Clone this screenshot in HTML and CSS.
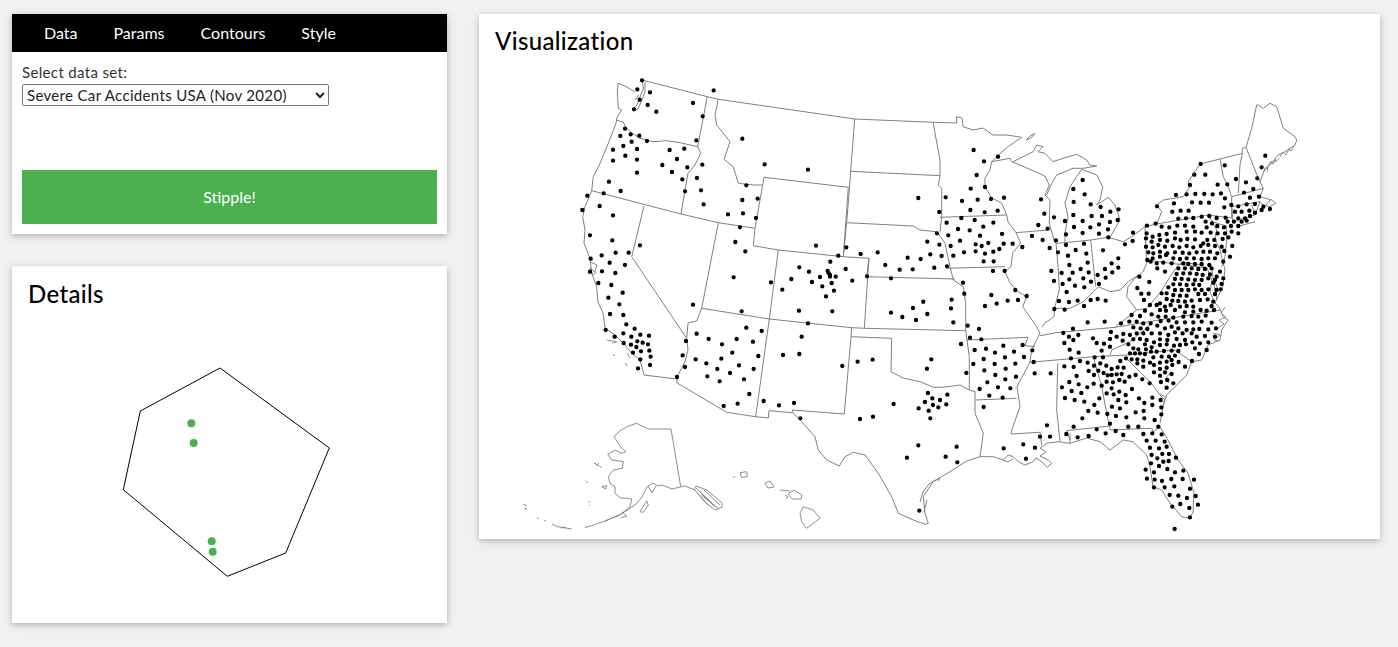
FILE: index.html
```html
<!DOCTYPE html>
<html lang="en">
<head>
  <meta charset="UTF-8">
  <title>Stippling</title>
  <link rel="stylesheet" href="styles.css">
</head>
<body>
<div class="page">
  <div class="side">
    <div class="card controls">
      <div class="tabs">
        <a href="#">Data</a>
        <a href="#">Params</a>
        <a href="#">Contours</a>
        <a href="#">Style</a>
      </div>
      <div class="tab-body">
        <label for="dataset">Select data set:</label>
        <select id="dataset">
          <option>Severe Car Accidents USA (Nov 2020)</option>
        </select>
        <button class="go">Stipple!</button>
      </div>
    </div>
    <div class="card details">
      <h2>Details</h2>
      <svg class="details-plot" viewBox="12 320 435 303">
        <polygon class="cell" points="220,368 329.3,448 285.7,553 227.3,576.3 123.3,489.7 140.3,411"/>
        <circle class="pick" cx="191.3" cy="423.3" r="4"/>
        <circle class="pick" cx="193.7" cy="443" r="4"/>
        <circle class="pick" cx="211.7" cy="541.3" r="4"/>
        <circle class="pick" cx="212.7" cy="551.7" r="4"/>
      </svg>
    </div>
  </div>
  <div class="card vis">
    <h2>Visualization</h2>
    <svg class="map" viewBox="479 66 901 473">
      <!-- outer coast and borders -->
      <path class="states" d="M642 80 707.3 96.7 718.3 99.3 854.7 119 933.3 122.3 956.7 123 956.7 116.7 962 118 963 126.7 973 130 983 128 993 135 1006.7 135 1021.7 137.3 1008 146.7 996.7 156.7 991.7 161.7 990 170 985 178 985 186.7 991.7 198 1001.7 203 1006.7 215 1008 221.7 1016 232.7 1020.7 243 1012.7 253 1011 266.7 1005 271.7 1010 283 1018 291.7 1026.7 296.7 1022.7 306.7 1036.7 326.7 1040 333 1035 343 1031.7 350 1030 362 1017 386.7 1020 406.7 1011.7 430 1011 434 1040 432.3 1041.7 445"/>
      <path class="states" d="M618.3 83.3 617.3 90 618.3 108.3 621.7 110 617.3 116.7 616 123.3 608.3 143.3 600 163.3 593.3 176.7 591.7 190.7 585 206.7 582.7 216.7 585 230 584 243.3 590 258.3 591.7 273.3 596.7 286.7 598 301.7 603 313 605 328 615 335 623 343 631.7 353 640 360 644 375 676.7 379M618.3 83.3 627 87 635 92"/>
      <path class="states" d="M642 80 643.5 88 640 97 637 105 633 109M645 82 645 92 641 102 638 109 634 110M639 95 635 100M616 120 623 122 626 127 630 131.7 640 138.3 653 141.7 666.7 140.7 680 142.7 697.7 146.7 707.3 96.7M697.7 146.7 700.7 153.3 695 165 688 173.3 685 190 681 214M591.7 190.7 681 214 718.3 222.7 755 228.3 764 177.3 848.3 187.3 843.3 256.7 778.3 250 753.3 245.7 755 228.3"/>
      <path class="states" d="M644 206 631.7 256.7 686.7 338.3 688 350 685 361.7 678 375 676.7 382.7 726.7 412.3 755.7 416.7 769.3 319 701.7 308.3 718.3 222.7M686.7 338.3 688 323 696.7 321 701.7 308.3M778.3 250 769.3 319 851.7 327.7 864.3 328.3 869 258.3 843.3 256.7M864.3 328.3 965.7 330.7M851.7 327.7 851 336.7 891.7 338.3 891 371.7 903 378 920 381.7 933.3 387.3 943 387.3 960 385 969.3 390 975 391.7 975 413.3 983.3 433.3 980 456.7 966.7 461 950 471.7 933 481.7 923.3 496.7 925 513.3 928.3 523.3 925 524.3 913.3 520 898.3 513.3 891.7 496.7 878.3 473.3 865 455 853.3 452.3 845 456.7 839.3 466 826.7 460 818.3 450 815 436.7 801.7 421.7 793.3 413.3 792.3 410M920 502 923 492 929 484 936 480 940 478 938 481M924 512 927 500"/>
      <path class="states" d="M755.7 416.7 768.3 418 769 410.7 792.3 412.7M792.3 410 844.3 414 851 336.7M718.3 99.3 715 115 716.7 125 730 141.7 724 159.3 733.3 166.7 738.3 183.3 753.3 185 762.3 185M854.7 119 850.7 171.3 846.7 222.7 843.3 256.7M850.7 171.3 940 175.7M846.7 222.7 913.3 226 920 230 936.7 231.7 945 243.3 950 266.7 953.3 280 963.3 286.7 965.7 303.3 965.7 330.7 969.3 356.7 969.3 390M933.3 122.3 935 133.3 940 160 940 175.7 938.3 185 941.7 188.3 941.7 216.7 940 231.7M869 258.3 866.7 276.7 955 279M940 217.3 1006.7 215M946.7 268.3 1005 266.7M966.7 340 1028 337.3 1025 345.7 1035 346.7M975 400 1016.7 398.3"/>
      <!-- great lakes -->
      <path class="states" d="M991.7 161.7 1010 158.3 1011.7 161.7 1020 165 1045 176 1049.3 185 1045 195 1050 200 1049.3 223.3 1054 240 1056 243.3 1065 242.7 1090.7 240 1108.3 237.3 1123.3 241.7 1131.7 236.7 1145 226.7 1146.7 263.3 1143 271.7 1133.3 280 1128 286.7 1126.7 296.7 1136.7 310 1146.7 308.3 1160 293 1170 276.7 1178.3 265 1183 262 1200 265M1016 232.7 1048.3 230M1056 243.3 1058.3 270 1059.3 290 1055 306.7 1054 316.7 1045 323 1041.7 327.3M1090.7 240 1095.7 286.7M1054 308.3 1070 308.3 1083.3 301.7 1093.3 291.7 1098.3 286.7 1110 291.7 1120 290 1128.3 281.7 1138.3 275"/>
      <path class="states" d="M1013 161.7 1026.7 155 1033 151.7 1036.7 145 1043 146.7 1038 151.7 1045 153.3 1053 161.7 1063 158.3 1076.7 154.3 1086.7 160 1090 165 1096.7 166 1083 168.3 1073 168.3 1065 171.7 1056.7 175 1051.7 183.3 1046.7 195M1026 140 1030 136 1035 133.5 1031 138 1026 140M1065 242.7 1065 233 1068 216.7 1065 203 1070 186.7 1076.7 176.7 1081.7 169.3 1096.7 175 1102.7 186.7 1100 200 1096.7 205 1108.3 197.3 1115 205 1120 220 1110 237.3"/>
      <!-- northeast -->
      <path class="states" d="M1145 226.7 1156.7 224 1208.3 215 1216.7 230 1215 238.3 1220 250 1225 270 1222.7 286.7 1218 296.7 1215 303M1156.7 224 1161.7 211.7 1156.7 205 1163.3 200 1183.3 196.7 1190 186.7 1188.3 181.7 1200 164 1220 159 1242.3 153.3 1242.3 148.3 1246 147.3 1258.3 178.3 1263.3 188.3 1260 196.7 1271.7 200 1275.7 203 1270 206.7 1263 205 1260 201.7 1231.7 206.7 1233 221.7 1255 215 1260 201.7M1220 159 1223.3 176.7 1228.3 186.7 1231.7 196.7 1231.7 218 1208.3 215M1242.3 153.3 1240 165 1238.3 193.3M1231.7 196.7 1263.3 188.3M1246 147.3 1251.7 128.3 1256.7 105 1258.3 105 1263.3 108.3 1270 103.3 1276.7 106.7 1283.3 128.3 1295 136.7 1296.7 140 1295 145 1285 151.7 1278.3 155 1270 165 1265 168.3 1260 181.7M1251.7 205 1255 215M1236.7 226.7 1255 221.7M1211.7 221.7 1226.7 226 1226.7 240 1225 256.7 1221.7 266.7M1146.7 260 1207 268M1200 265 1207 268 1212 280 1210 292 1215 303M1212 270 1214 285 1217 300M1215 303 1219 306.7 1223 316.7 1228 320 1221.7 330 1220 340 1208 345 1201.7 360 1191.7 361.7 1186.7 375 1176.7 385 1166.7 395 1163 406.7 1160 423.3"/>
      <path class="states thin" d="M1280 157 1283 152 1286 155 1289 149 1291 151 1294 146M1268 166 1271 161 1273 164 1275 159 1276 162 1279 158M1264 171 1268 167 1267 172M1266 205 1270 200M1225 307 1221 313 1226 317 1219 320 1224 324 1217 329M1213 333 1220 335 1214 340 1220 341M1214 278 1218 290M1171 372 1165 379 1169 383M1160 394 1166 397 1163 403"/>
      <path class="states" d="M1040 335.7 1056 332.7 1115 327.3 1220 310M1115 327.3 1133 313 1136.7 310M1030 362.3 1093.3 356.7 1126.7 355 1175 350 1191.7 361.7M1110 355 1111.7 350 1130 341.7 1150 325M1128 360 1138 370 1150 381.7 1160 395 1165 400M1093.3 356.7 1101.7 386.7 1106.7 413.3 1110 428.3 1110 430 1151.7 428.3 1153 431.7 1160 426.7M1057.7 363.3 1056.7 410 1060 441.7M1066.7 430.7 1110 426M1066.7 430.7 1070 440"/>
      <!-- gulf coast -->
      <path class="states" d="M1160 426.7 1168 440 1178 460 1188 473 1194 493 1193 513 1188 518 1181.7 516.7 1170 503 1161.7 490 1153 486.7 1150 466.7 1146.7 455 1133 441.7 1123.3 440 1110 450 1100 441.7 1086.7 438 1070 443.3 1058.3 441.7 1046.7 443.3 1040 448.3 1046 451.7 1040 456 1048.3 460 1051.7 463.3 1047.3 467.3 1041.7 461.7 1036 458 1033.3 461.7 1025 465 1018.3 461.7 1013.3 456.7 1008.3 455 1003.3 460 1008 462 1013 459M993.3 456.7 1003.3 460M980 456.7 993.3 456.7M1070 434 1070 443.3"/>
      <!-- alaska, hawaii, islands -->
      <path class="states thin" d="M671 429 680.7 486.7M671 429 661.7 429 648.3 429 636.7 423.3 628.3 426 621 430 614 436.7 618.3 443.3 621.7 448.3 626 451.7 621.7 453.3 615 450 607.7 454.3 611.7 460 623.3 461.7 622.3 468.3 613.3 470 608.3 476.7 610 483.3 615 486.7 615 493.3 620 497.7 631.7 499 630 506.7 620 515 605 521 591.7 525.7 585 527.5M605 521 621 514 635 505 642 497 647 487 653 483 658 486 662 485 672 489 680 487 685 486 695 490 705 502 715 510 722 507 722 503 707 490 696 486 694 490M696 488 712 503M699 491 715 507M701 495 718 508M704 490 720 505M697 493 708 505M648 486 652 493 656 486M622 512 627 516 621 518M640 511.7 646.7 501 648.3 505 643.3 512.3ZM594 463 598 465 601.7 467.7M596 466 599 463M601.7 486.7 606.7 485.7 605.7 489 601.7 486.7M585.7 480.7 588 483M588.3 501.7 590 502M589 505 590 505.7M523 504 527 506M524 508 527 509M537 517.7 539 519M544 520 546 521M552 524 558 527M558 526.7 571.7 529M561 528 566 527"/>
      <path class="states thin" d="M803.3 506.7 813.3 510 820 518.3 806.7 528.3 801.7 521.7 800 513.3 803.3 506.7ZM788 494 794 490 802 495 801 499 792 499ZM765 483 770 481 774 487 768 488ZM740 472.7 746.7 471.7 747.3 476.7 741.7 477.3ZM733.3 478 735 476M780 490 790 491M785 495 788 497 786 499"/>
      <path class="states thin" d="M606.7 340 616.7 341.7 612 343M613 354 615 356M627 353 630 358M625 363 627 366M590 262 597 265 595 272 590 268 593 275 597 272"/>
      <!-- stipples, one layer per part of the map -->
      <path class="dots" transform="translate(570 70) scale(.3333)" d="M216 31h0M202 58h0M240 67h0M431 61h0M209 89h0M369 99h0M233 105h0M192 118h0M259 125h0M398 139h0M165 176h0M182 193h0M208 197h0M151 198h0M517 206h0M379 211h0M185 215h0M231 213h0M160 228h0M201 237h0M129 239h0M343 236h0M299 240h0M166 257h0M201 269h0M321 267h0M129 272h0M277 285h0M397 284h0M584 283h0M352 292h0M714 299h0M201 308h0M306 306h0M381 324h0M337 328h0M117 335h0M529 346h0M393 361h0M152 363h0M345 364h0M101 370h0M52 377h0M563 386h0M1045 384h0M1127 382h0M517 390h0M401 403h0M89 408h0M37 420h0M519 430h0M474 433h0M129 436h0M1108 426h0M558 444h0M1130 458h0M510 472h0M1101 490h0M1135 496h0M60 496h0M127 511h0M496 516h0M1072 515h0M738 527h0M1108 524h0M210 526h0M829 532h0M137 548h0M526 544h0M176 548h0M95 556h0M872 552h0M923 547h0M805 557h0M62 566h0M1081 553h0M1115 558h0M1013 563h0M1052 567h0M781 575h0M119 578h0M165 585h0M946 585h0M1131 589h0M688 592h0M1093 593h0M827 597h0M989 599h0M1028 598h0M717 605h0M773 603h0M60 605h0M96 604h0M136 609h0M776 610h0M780 615h0M780 620h0M797 620h0M750 621h0M491 622h0M664 627h0M891 619h0M963 625h0M603 637h0M847 632h0M726 636h0M785 639h0M85 639h0M124 645h0M637 659h0M757 649h0M792 662h0M158 668h0M1060 695h0M768 679h0M115 683h0M148 703h0M369 704h0M1029 714h0"/>
      <path class="dots" transform="translate(570 300) scale(.3333)" d="M515 34h0M687 32h0M787 34h0M963 38h0M1072 42h0M120 42h0M160 45h0M997 51h0M1038 60h0M714 70h0M169 73h0M529 83h0M194 86h0M107 90h0M575 93h0M380 101h0M160 100h0M211 104h0M237 107h0M134 110h0M184 110h0M695 110h0M416 117h0M500 117h0M202 124h0M218 128h0M161 129h0M549 125h0M234 133h0M183 134h0M456 133h0M199 141h0M348 123h0M238 152h0M213 154h0M189 158h0M487 158h0M639 165h0M688 162h0M338 166h0M565 168h0M242 170h0M377 178h0M454 176h0M211 178h0M1084 178h0M908 179h0M863 185h0M409 190h0M240 195h0M507 196h0M817 198h0M345 201h0M442 207h0M204 205h0M551 207h0M1071 206h0M480 219h0M412 229h0M321 231h0M522 238h0M449 244h0M1074 279h0M1132 284h0M538 282h0M1087 295h0M1110 300h0M581 303h0M1065 306h0M672 309h0M503 311h0M971 312h0M1089 315h0M1129 313h0M627 316h0M461 318h0M1105 322h0M1046 325h0M1076 332h0M691 355h0M870 357h0M909 350h0M1081 355h0M1045 436h0M1011 473h0M1127 470h0M1048 632h0"/>
      <path class="dots" transform="translate(930 300) scale(.3333)" d="M473 67h0M524 65h0M70 67h0M573 70h0M113 77h0M147 87h0M429 86h0M400 99h0M543 96h0M445 105h0M417 110h0M120 113h0M154 118h0M489 115h0M430 120h0M560 110h0M580 102h0M540 117h0M93 132h0M278 135h0M403 129h0M500 129h0M522 131h0M578 122h0M595 133h0M540 140h0M220 137h0M168 146h0M134 150h0M419 149h0M307 151h0M252 155h0M195 158h0M515 152h0M446 158h0M225 172h0M161 177h0M282 171h0M423 175h0M494 172h0M519 172h0M450 183h0M473 188h0M311 186h0M130 192h0M194 192h0M256 191h0M403 199h0M431 201h0M492 197h0M511 190h0M529 197h0M545 207h0M563 202h0M581 203h0M571 183h0M588 175h0M227 206h0M163 211h0M505 212h0M521 219h0M533 226h0M545 225h0M560 223h0M575 222h0M598 230h0M617 225h0M637 238h0M109 219h0M314 220h0M362 220h0M196 225h0M440 228h0M476 213h0M492 225h0M258 230h0M226 238h0M172 247h0M418 246h0M491 251h0M515 257h0M530 245h0M549 247h0M568 240h0M584 245h0M659 250h0M446 253h0M204 262h0M241 265h0M149 267h0M396 262h0M472 262h0M545 265h0M568 275h0M606 267h0M425 273h0M454 279h0M178 287h0M530 280h0M551 283h0M587 285h0M218 293h0M405 294h0M434 300h0M508 295h0M565 300h0M627 295h0M667 293h0M692 300h0M463 305h0M589 307h0M643 309h0M667 315h0M546 320h0M570 325h0M161 321h0M493 315h0M694 322h0M475 333h0M503 338h0M617 337h0M641 333h0M532 342h0M558 348h0M589 352h0M694 343h0M457 355h0M643 355h0M674 360h0M351 376h0M431 380h0M540 371h0M595 380h0M625 380h0M685 380h0M500 388h0M557 393h0M640 402h0M667 400h0M695 403h0M527 400h0M409 402h0M580 405h0M330 410h0M360 410h0M443 412h0M476 408h0M650 422h0M677 422h0M704 425h0M280 433h0M315 443h0M221 445h0M80 440h0M660 443h0M687 445h0M710 440h0M697 462h0M717 462h0M665 465h0M738 473h0M682 475h0M716 483h0M700 485h0M663 490h0M82 487h0M288 476h0M687 498h0M712 507h0M647 509h0M760 512h0M672 517h0M735 517h0M651 536h0M674 539h0M696 543h0M724 537h0M758 537h0M792 539h0M733 559h0M704 562h0M672 562h0M780 566h0M745 587h0M719 585h0M771 594h0M797 588h0M804 614h0M751 612h0M727 620h0M778 624h0M780 652h0M734 687h0"/>
      <path class="dots" transform="translate(930 300) scale(.3333)" d="M645 32h0M665 43h0M690 30h0M708 32h0M735 30h0M765 37h0M790 35h0M812 30h0M830 32h0M852 30h0M605 45h0M630 48h0M685 50h0M707 50h0M730 53h0M760 50h0M785 48h0M805 50h0M827 47h0M598 65h0M620 65h0M640 70h0M662 70h0M692 63h0M716 62h0M740 67h0M765 67h0M790 67h0M815 65h0M845 68h0M610 82h0M632 85h0M652 87h0M682 77h0M705 85h0M725 80h0M745 85h0M770 90h0M790 88h0M808 87h0M835 88h0M858 85h0M600 105h0M620 100h0M640 100h0M665 100h0M690 100h0M715 105h0M735 97h0M758 100h0M785 100h0M825 108h0M855 110h0M610 118h0M630 117h0M650 120h0M672 127h0M690 118h0M712 120h0M740 117h0M765 120h0M800 110h0M610 145h0M645 133h0M665 142h0M690 135h0M710 133h0M732 137h0M750 135h0M768 133h0M787 127h0M810 130h0M835 127h0M625 148h0M648 148h0M663 155h0M680 155h0M702 153h0M725 152h0M745 153h0M795 145h0M830 150h0M600 160h0M615 160h0M630 160h0M645 162h0M670 172h0M695 170h0M717 170h0M735 167h0M807 162h0M605 178h0M622 178h0M640 182h0M660 188h0M690 188h0M710 185h0M725 180h0M746 186h0M786 183h0M622 190h0M640 200h0M672 195h0M690 207h0M710 203h0M727 195h0M765 200h0M672 217h0M705 217h0M725 222h0M690 227h0M712 240h0M693 246h0M730 250h0M710 263h0"/>
      <path class="dots" transform="translate(930 90) scale(.3333)" d="M131 180h0M162 214h0M204 200h0M140 255h0M122 296h0M165 291h0M96 333h0M143 329h0M183 327h0M222 323h0M333 328h0M121 360h0M164 367h0M203 362h0M343 371h0M372 382h0M405 393h0M94 384h0M134 390h0M190 398h0M160 410h0M325 405h0M353 416h0M84 417h0M119 421h0M150 437h0M216 432h0M306 438h0M338 450h0M90 452h0M175 459h0M137 463h0M155 468h0M221 461h0M62 468h0M248 461h0M277 471h0M208 477h0M190 485h0M137 484h0M165 491h0M102 487h0M70 497h0M359 474h0M161 514h0M191 514h0M189 543h0M224 543h0M364 543h0M372 573h0M99 578h0M256 600h0M103 611h0M184 615h0M290 618h0M65 629h0M233 632h0M264 630h0M200 641h0M165 648h0M63 655h0M458 270h0M430 297h0M464 313h0M431 336h0M482 343h0M512 351h0M541 365h0M566 358h0M430 375h0M485 378h0M516 378h0M563 390h0M540 396h0M458 393h0M432 411h0M481 412h0M507 403h0M534 418h0M408 433h0M458 429h0M507 431h0M535 442h0M378 451h0M408 465h0M437 480h0M462 461h0M384 487h0M414 497h0M469 491h0M519 481h0M565 505h0M545 520h0M525 537h0M565 533h0M547 547h0M418 525h0M452 537h0M473 518h0M395 549h0M428 548h0M476 547h0M503 555h0M527 563h0M418 568h0M460 565h0M398 582h0M483 575h0M435 587h0M463 592h0M507 582h0M410 606h0M622 594h0M634 611h0M658 576h0M656 611h0M642 630h0M387 633h0M417 636h0M443 632h0M482 630h0M503 627h0M527 632h0M373 657h0M404 659h0M462 648h0M609 428h0M651 407h0M585 463h0M608 453h0M677 401h0M681 349h0M628 560h0"/>
      <path class="dots" transform="translate(930 90) scale(.3333)" d="M812 222h0M884 226h0M1006 197h0M995 232h0M793 254h0M826 254h0M918 267h0M948 277h0M982 265h0M780 285h0M863 284h0M892 283h0M942 308h0M970 297h0M738 315h0M770 313h0M796 312h0M823 312h0M848 313h0M873 310h0M960 323h0M987 320h0M732 340h0M786 337h0M812 338h0M837 338h0M885 325h0M904 345h0M883 352h0M925 349h0M950 343h0M975 342h0M1000 350h0M1020 357h0M727 365h0M752 362h0M776 362h0M915 365h0M935 365h0M958 362h0M975 368h0M995 360h0M745 386h0M768 385h0M790 384h0M815 380h0M838 378h0M860 384h0M887 383h0M925 385h0M945 385h0M960 378h0M827 395h0M846 400h0M893 395h0M912 395h0M935 395h0M950 392h0M695 410h0M718 412h0M742 407h0M765 407h0M790 410h0M830 412h0M862 408h0M882 412h0M903 408h0M925 408h0M650 430h0M668 440h0M688 435h0M710 432h0M735 428h0M770 425h0M795 425h0M815 428h0M842 428h0M863 430h0M885 430h0M905 425h0M925 430h0M648 445h0M665 455h0M690 450h0M712 452h0M735 445h0M752 450h0M772 447h0M795 448h0M820 460h0M832 450h0M853 450h0M878 447h0M895 442h0M648 470h0M668 472h0M685 465h0M705 470h0M728 468h0M748 472h0M770 468h0M790 472h0M812 468h0M835 465h0M855 468h0M875 470h0M907 468h0M655 487h0M670 490h0M690 485h0M712 490h0M735 487h0M758 488h0M778 490h0M800 487h0M820 485h0M840 485h0M862 490h0M883 483h0M652 510h0M668 505h0M690 500h0M708 495h0M730 505h0M750 507h0M770 505h0M792 505h0M815 507h0M835 505h0M855 505h0M900 500h0M662 515h0M680 520h0M700 518h0M725 520h0M760 520h0M775 522h0M795 522h0M815 522h0M838 525h0M880 515h0M682 535h0M705 545h0M745 535h0M765 535h0M785 535h0M805 537h0M825 537h0M845 535h0M870 545h0M740 552h0M760 550h0M780 550h0M800 552h0M818 555h0M840 553h0M860 560h0M735 567h0M755 567h0M775 568h0M795 570h0M815 570h0M835 565h0M855 570h0M880 565h0M730 583h0M750 583h0M770 585h0M790 583h0M808 585h0M850 578h0M875 582h0M715 592h0M735 600h0M755 600h0M775 600h0M795 598h0M815 600h0M835 598h0M860 600h0M872 598h0M695 610h0M710 610h0M730 615h0M750 617h0M770 617h0M805 612h0M825 612h0M855 612h0M710 627h0M690 640h0M727 632h0M745 633h0M765 635h0M785 632h0M810 630h0M833 628h0M850 635h0M660 645h0M680 645h0M705 650h0M722 645h0M750 650h0M770 648h0M790 650h0M845 648h0"/>
    </svg>
  </div>
</div>
</body>
</html>
```
FILE: styles.css
```css
body {
  margin: 0;
  font-family: 'Lato', sans-serif;
  background: #f1f1f1;
  color: #000;
}
.page {
  display: flex;
  align-items: flex-start;
  gap: 32px;
  padding: 14px 18px 24px 12px;
}
.side {
  width: 435px;
  display: flex;
  flex-direction: column;
  gap: 32px;
}
.card {
  background: #fff;
  box-shadow: 0 2px 5px rgba(0, 0, 0, .16), 0 2px 10px rgba(0, 0, 0, .12);
}
.tabs {
  background: #000;
  box-sizing: border-box;
  height: 38px;
  padding: 0 0 2px 32px;
  display: flex;
  align-items: center;
  gap: 36px;
}
.tabs a {
  color: #fff;
  text-decoration: none;
  font-size: 16px;
}
.tab-body {
  padding: 11px 10px 10px;
  display: flex;
  flex-direction: column;
  align-items: flex-start;
  font-size: 15px;
  color: #333;
}
.tab-body label {
  line-height: 18px;
  letter-spacing: .35px;
}
.tab-body select {
  width: 307px;
  height: 22px;
  margin-top: 3px;
  padding: 0 0 2px;
  font-family: inherit;
  font-size: 15px;
  letter-spacing: .33px;
  background: #fff;
  color: #222;
  border: 1px solid #767676;
  border-radius: 2px;
}
.go {
  width: 100%;
  height: 54px;
  margin-top: 64px;
  padding-bottom: 3px;
  background: #4caf50;
  color: #fff;
  border: none;
  font-family: inherit;
  font-size: 16px;
  cursor: pointer;
}
h2 {
  margin: 0;
  font-size: 24px;
  font-weight: 500;
  line-height: 30px;
  letter-spacing: .35px;
}
.details h2 {
  padding: 13px 16px 11px;
}
.details-plot {
  display: block;
  width: 435px;
  height: 303px;
}
.cell {
  fill: none;
  stroke: #000;
  stroke-width: 1;
}
.pick {
  fill: #4caf50;
}
.vis {
  width: 901px;
}
.vis h2 {
  padding: 12px 16px 10px;
}
.map {
  display: block;
  width: 901px;
  height: 473px;
}
.states {
  fill: none;
  stroke: #808080;
  stroke-width: 1;
}
.states.thin {
  stroke-width: .9;
}
.dots {
  fill: none;
  stroke: #000;
  stroke-width: 13;
  stroke-linecap: round;
}
```
